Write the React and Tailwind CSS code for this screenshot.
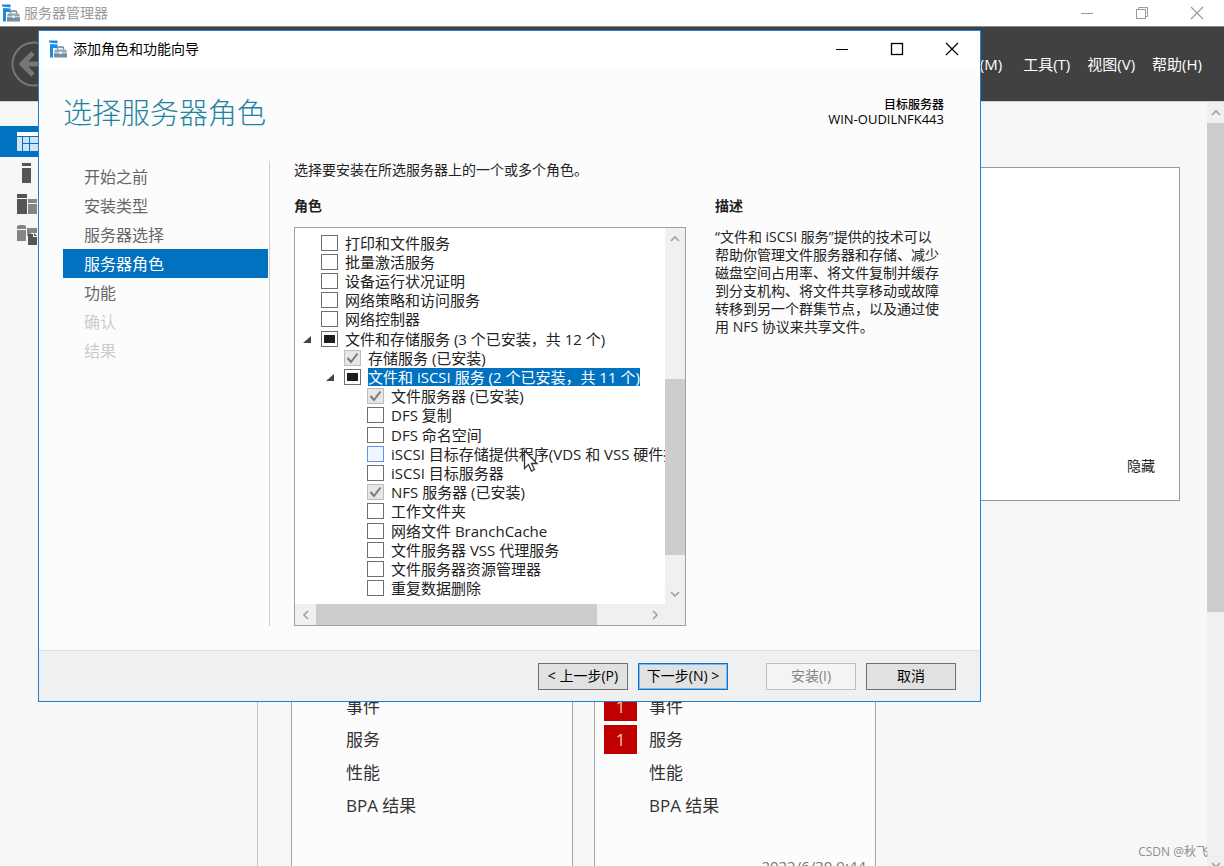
import React, { useState } from 'react';

const NAV_STEPS = [
  { label: '开始之前', state: 'done' },
  { label: '安装类型', state: 'done' },
  { label: '服务器选择', state: 'done' },
  { label: '服务器角色', state: 'current' },
  { label: '功能', state: 'done' },
  { label: '确认', state: 'disabled' },
  { label: '结果', state: 'disabled' },
];

const ROLES = [
  { id: 'print', label: '打印和文件服务', level: 0 },
  { id: 'activation', label: '批量激活服务', level: 0 },
  { id: 'health', label: '设备运行状况证明', level: 0 },
  { id: 'npas', label: '网络策略和访问服务', level: 0 },
  { id: 'controller', label: '网络控制器', level: 0 },
  { id: 'storage', label: '文件和存储服务 (3 个已安装，共 12 个)', level: 0, state: 'partial', open: true },
  { id: 'storage-svc', label: '存储服务 (已安装)', level: 1, state: 'installed' },
  { id: 'iscsi', label: '文件和 iSCSI 服务 (2 个已安装，共 11 个)', level: 1, state: 'partial', open: true, selected: true },
  { id: 'file-server', label: '文件服务器 (已安装)', level: 2, state: 'installed' },
  { id: 'dfs-r', label: 'DFS 复制', level: 2 },
  { id: 'dfs-n', label: 'DFS 命名空间', level: 2 },
  { id: 'iscsi-provider', label: 'iSCSI 目标存储提供程序(VDS 和 VSS 硬件提', level: 2, hot: true },
  { id: 'iscsi-target', label: 'iSCSI 目标服务器', level: 2 },
  { id: 'nfs', label: 'NFS 服务器 (已安装)', level: 2, state: 'installed' },
  { id: 'work-folders', label: '工作文件夹', level: 2 },
  { id: 'branchcache', label: '网络文件 BranchCache', level: 2 },
  { id: 'vss-agent', label: '文件服务器 VSS 代理服务', level: 2 },
  { id: 'fsrm', label: '文件服务器资源管理器', level: 2 },
  { id: 'dedup', label: '重复数据删除', level: 2 },
];

const INDENT = ['pl-[7px]', 'pl-[30px]', 'pl-[53px]'];

const ServerManagerIcon = () => (
  <svg width="18" height="18" viewBox="0 0 18 18" aria-hidden="true">
    <path d="M0 .5h8.500v3L0 2.500z" fill="#1a8ae2" />
    <path d="M1 4l7.500 .6V17.500H1z" fill="#1a8ae2" />
    <path d="M4 8h14v10H4z" fill="#fff" />
    <path d="M8.500 9.500V8q0-1 1-1h4q1 0 1 1v1.500" fill="none" stroke="#6d8796" strokeWidth="1.300" />
    <path d="M6 9.500h11l1 3H5z" fill="#8fa6b3" />
    <rect x="5" y="13.200" width="13" height="4.300" fill="#7590a0" />
    <rect x="10.300" y="11.500" width="2.400" height="2.500" fill="#eef3f6" />
  </svg>
);

const Chevron = ({ d }) => (
  <svg width="10" height="10" viewBox="0 0 10 10" fill="none" stroke="#a0a0a0" strokeWidth="1.600" aria-hidden="true">
    <path d={d} />
  </svg>
);

const UP = 'M1 7l4-4 4 4';
const DOWN = 'M1 3l4 4 4-4';
const LEFT = 'M7 1L3 5l4 4';
const RIGHT = 'M3 1l4 4-4 4';

const MinimizeIcon = () => (
  <svg width="14" height="14" viewBox="0 0 14 14" stroke="currentColor" fill="none">
    <path d="M1 7.500h12" />
  </svg>
);

const MaximizeIcon = () => (
  <svg width="14" height="14" viewBox="0 0 14 14" stroke="currentColor" fill="none">
    <rect x="1.500" y="1.500" width="11" height="11" strokeWidth="1.300" />
  </svg>
);

const RestoreIcon = () => (
  <svg width="14" height="14" viewBox="0 0 14 14" stroke="currentColor" fill="none">
    <path d="M3.500 3.500v-2h9v9h-2" />
    <rect x="1.500" y="3.500" width="9" height="9" />
  </svg>
);

const CloseIcon = () => (
  <svg width="14" height="14" viewBox="0 0 14 14" stroke="currentColor" fill="none">
    <path d="M1 1l12 12M13 1L1 13" strokeWidth="1.200" />
  </svg>
);

const SidebarItem = ({ active, label, children }) => (
  <button
    aria-label={label}
    className={`flex h-[31px] items-center pl-4 ${active ? 'bg-[#0072c0]' : ''}`}
  >
    <svg width="24" height="22" viewBox="0 0 24 22" aria-hidden="true">{children}</svg>
  </button>
);

const ServerTile = ({ rows, time }) => (
  <section className="flex w-[282px] flex-col border border-[#a6a6a6] bg-[#fcfcfc] pt-[126px]">
    {rows.map((row) => (
      <div key={row.label} className="flex h-[33px] items-center gap-3 pl-[9px] text-[17px] text-[#333]">
        <span
          className={`flex h-[29px] w-[33px] items-center justify-center ${
            row.alert ? 'bg-[#c00000] text-[#f0cfae]' : ''
          }`}
        >
          {row.alert}
        </span>
        <span>{row.label}</span>
      </div>
    ))}
    <time className="mt-8 h-6 pr-[9px] text-right text-[15px] leading-6 text-[#777]">{time}</time>
  </section>
);

const ServerManager = () => (
  <div className="flex h-full flex-col">
    <header className="flex h-[26px] shrink-0 items-center bg-white pl-[2px] text-[#9a9a9a]">
      <ServerManagerIcon />
      <h1 className="ml-1 flex-1 text-sm">服务器管理器</h1>
      <div className="flex gap-[41px] pr-5">
        <button aria-label="最小化"><MinimizeIcon /></button>
        <button aria-label="还原"><RestoreIcon /></button>
        <button aria-label="关闭"><CloseIcon /></button>
      </div>
    </header>

    <div className="flex h-[76px] shrink-0 items-center border-y border-t-[#8a8a8a] border-b-[#d0d0d0] bg-[#414141] pl-[11px]">
      <button aria-label="后退">
        <svg width="46" height="46" viewBox="0 0 46 46" fill="none" stroke="#777">
          <circle cx="23" cy="23" r="21.500" strokeWidth="2" />
          <path d="M22 12L11 23l11 11M12 23h24" strokeWidth="5" />
        </svg>
      </button>
      <nav className="ml-auto flex gap-[17px] pr-[22px] text-[15px] text-white">
        <button className="mr-1">管理(M)</button>
        <button>工具(T)</button>
        <button>视图(V)</button>
        <button>帮助(H)</button>
      </nav>
    </div>

    <div className="flex min-h-0 flex-1 bg-[#f7f7f7]">
      <aside className="flex w-[258px] shrink-0 flex-col border-r border-[#c4c4c4] pt-6">
        <SidebarItem active label="仪表板">
          <rect x="1" y="1" width="22" height="4" fill="#fff" />
          <path d="M1 6h5v14H1zM7 6h6v6H7zM14 6h9v6h-9zM7 13h6v7H7zM14 13h9v7h-9z" fill="#cfe3f2" />
        </SidebarItem>
        <SidebarItem label="本地服务器">
          <path d="M6 1h9v3H6zM6 6h9v15H6z" fill="#555" />
        </SidebarItem>
        <SidebarItem label="所有服务器">
          <path d="M1 1h10v4H1zM1 6h10v15H1z" fill="#555" />
          <path d="M12 6h9v4h-9zM12 11h9v10h-9z" fill="#858585" />
        </SidebarItem>
        <SidebarItem label="文件和存储服务">
          <path d="M1 2l2-1h5l2 1v3H1zM1 6h9v11H1zM11 4h10v5h-6v3h-4z" fill="#858585" />
          <path d="M12 10h5v3h4v8h-9z" fill="#555" />
          <path d="M18 9l3 3h-3z" fill="#555" />
        </SidebarItem>
      </aside>

      <main className="flex min-w-0 flex-1 flex-col pr-[27px] pl-[33px]">
        <section className="mt-[65px] flex h-[334px] shrink-0 items-end justify-end border border-[#999] bg-white p-6">
          <button className="text-sm text-[#222]">隐藏</button>
        </section>
        <div className="mt-[62px] flex shrink-0 gap-[21px]">
          <ServerTile rows={[{ label: '事件' }, { label: '服务' }, { label: '性能' }, { label: 'BPA 结果' }]} />
          <ServerTile
            rows={[{ label: '事件', alert: 1 }, { label: '服务', alert: 1 }, { label: '性能' }, { label: 'BPA 结果' }]}
            time="2022/6/30 9:44"
          />
        </div>
      </main>

      <div className="flex w-[17px] shrink-0 flex-col bg-[#f0f0f0]">
        <button aria-label="向上滚动" className="flex h-[21px] items-center justify-center"><Chevron d={UP} /></button>
        <div className="h-[64%] bg-[#cdcdcd]" />
        <button aria-label="向下滚动" className="-mb-1 mt-auto flex justify-center"><Chevron d={DOWN} /></button>
      </div>
    </div>
  </div>
);

const RoleRow = ({ role, checked, onToggle }) => {
  const installed = role.state === 'installed';
  const partial = role.state === 'partial';

  return (
    <li className={`flex min-h-0 flex-1 items-center ${INDENT[role.level]}`}>
      <span className="flex w-[19px] shrink-0">
        {role.open && (
          <svg width="10" height="10" viewBox="0 0 10 10" aria-hidden="true">
            <path d="M9 2v7H1z" fill="#444" />
          </svg>
        )}
      </span>
      <span className="grid shrink-0 place-items-center">
        <input
          id={role.id}
          type="checkbox"
          checked={installed || checked}
          disabled={installed}
          onChange={onToggle}
          className={`col-start-1 row-start-1 h-4 w-[17px] appearance-none border ${
            installed ? 'border-[#bcbcbc] bg-[#e6e6e6]' : role.hot ? 'border-[#5c93f5] bg-[#f0f6ff]' : 'border-[#707070] bg-white'
          }`}
        />
        {partial && <span className="pointer-events-none col-start-1 row-start-1 h-2 w-[11px] bg-[#1e1e1e]" />}
        {(installed || checked) && (
          <svg className="pointer-events-none col-start-1 row-start-1" width="13" height="12" viewBox="0 0 13 12" fill="none">
            <path d="M1.500 6l3.500 4L11.500 1.500" stroke="#777" strokeWidth="2" />
          </svg>
        )}
      </span>
      <label
        htmlFor={role.id}
        className={`ml-[7px] text-[15px] leading-[18px] whitespace-nowrap ${role.selected ? 'bg-[#0072c0] text-white' : ''}`}
      >
        {role.label}
      </label>
    </li>
  );
};

const RoleTree = () => {
  const [checked, setChecked] = useState({});

  const toggle = (id) => setChecked((prev) => ({ ...prev, [id]: !prev[id] }));

  return (
    <div className="flex min-h-0 flex-1 flex-col border border-[#a0a0a0] bg-white">
      <div className="flex min-h-0 flex-1">
        <ul className="flex min-w-0 flex-1 flex-col overflow-hidden pt-[5px] pb-[6px]">
          {ROLES.map((role) => (
            <RoleRow key={role.id} role={role} checked={!!checked[role.id]} onToggle={() => toggle(role.id)} />
          ))}
        </ul>
        <div className="flex w-5 shrink-0 flex-col bg-[#f0f0f0]">
          <button aria-label="向上" className="flex h-[22px] items-center justify-center"><Chevron d={UP} /></button>
          <div className="mt-auto h-[176px] bg-[#cdcdcd]" />
          <button aria-label="向下" className="mt-7 flex h-[21px] items-center justify-center"><Chevron d={DOWN} /></button>
        </div>
      </div>
      <div className="flex h-[21px] shrink-0 bg-[#f0f0f0] pr-5">
        <button aria-label="向左" className="flex w-[21px] items-center justify-center"><Chevron d={LEFT} /></button>
        <div className="w-[281px] bg-[#cdcdcd]" />
        <button aria-label="向右" className="ml-auto flex w-[21px] items-center justify-center"><Chevron d={RIGHT} /></button>
      </div>
    </div>
  );
};

const WizardButton = ({ variant = 'normal', disabled, children }) => {
  const look = {
    normal: 'border-[#707070] bg-[#e1e1e1] text-black',
    primary: 'border-[#0078d7] bg-[#e1e1e1] text-black ring-1 ring-[#0078d7]/40 ring-inset',
    disabled: 'border-[#bfbfbf] bg-[#f4f4f4] text-[#838383]',
  }[disabled ? 'disabled' : variant];

  return (
    <button disabled={disabled} className={`h-[27px] w-[90px] border text-sm whitespace-nowrap ${look}`}>
      {children}
    </button>
  );
};

const Wizard = () => (
  <div
    role="dialog"
    aria-labelledby="wizard-title"
    className="absolute top-[30px] left-[38px] flex h-[672px] w-[943px] flex-col border border-[#1c80d6] bg-[#fcfcfc]"
  >
    <div className="flex h-9 shrink-0 items-center bg-white pr-[21px] pl-[10px] text-black">
      <ServerManagerIcon />
      <h2 id="wizard-title" className="ml-[6px] flex-1 text-sm">添加角色和功能向导</h2>
      <div className="flex gap-[41px]">
        <button aria-label="最小化"><MinimizeIcon /></button>
        <button aria-label="最大化"><MaximizeIcon /></button>
        <button aria-label="关闭"><CloseIcon /></button>
      </div>
    </div>

    <div className="flex justify-between pt-6 pr-9 pl-6">
      <h3 className="text-[29px] leading-[44px] font-light text-[#1f829f]">选择服务器角色</h3>
      <div className="pt-[6px] text-right text-black">
        <p className="text-xs leading-[15px] font-medium">目标服务器</p>
        <p className="text-[13px] leading-[15px]">WIN-OUDILNFK443</p>
      </div>
    </div>

    <div className="flex min-h-0 flex-1 pt-[26px] pr-[38px] pb-6 pl-6">
      <nav className="mr-6 w-[207px] shrink-0 border-r border-[#cfcfcf] pt-px pr-[1px]">
        {NAV_STEPS.map((step) => (
          <button
            key={step.label}
            disabled={step.state === 'disabled'}
            className={`block h-[29px] w-full pl-[21px] text-left text-base ${
              step.state === 'current' ? 'bg-[#0072c0] text-white' : step.state === 'disabled' ? 'text-[#ccc]' : 'text-[#666]'
            }`}
          >
            {step.label}
          </button>
        ))}
      </nav>

      <div className="flex w-[392px] shrink-0 flex-col text-[#222]">
        <p className="text-sm leading-[18px]">选择要安装在所选服务器上的一个或多个角色。</p>
        <h4 className="mt-[18px] mb-3 text-sm leading-[18px] font-bold">角色</h4>
        <RoleTree />
      </div>

      <div className="ml-[29px] min-w-0 flex-1 pt-9 text-sm leading-[18px] text-[#222]">
        <h4 className="mb-[13px] font-bold">描述</h4>
        <p>
          “文件和 iSCSI 服务”提供的技术可以帮助你管理文件服务器和存储、减少磁盘空间占用率、将文件复制并缓存到分支机构、将文件共享移动或故障转移到另一个群集节点，以及通过使用 NFS 协议来共享文件。
        </p>
      </div>
    </div>

    <footer className="flex h-[51px] shrink-0 items-center justify-end border-t border-[#dfdfdf] bg-[#f0f0f0] pr-6">
      <div className="flex gap-[10px]">
        <WizardButton>&lt; 上一步(P)</WizardButton>
        <WizardButton variant="primary">下一步(N) &gt;</WizardButton>
      </div>
      <div className="ml-[38px] flex gap-[10px]">
        <WizardButton disabled>安装(I)</WizardButton>
        <WizardButton>取消</WizardButton>
      </div>
    </footer>
  </div>
);

export default function App() {
  return (
    <div
      lang="zh-CN"
      className="relative h-screen overflow-hidden bg-[#f7f7f7] font-['Open_Sans','Noto_Sans_CJK_SC',sans-serif]"
    >
      <ServerManager />
      <Wizard />
      <svg className="pointer-events-none absolute top-[449px] left-[523px]" width="16" height="24" viewBox="0 0 16 24">
        <path d="M1.500 1.500v18l4-4 3 6.500 3-1.500-3-6h5.500z" fill="#fff" stroke="#333" strokeWidth="1.300" />
      </svg>
      <span className="absolute right-4 bottom-1 text-xs leading-5 text-[#8f8f8f]">CSDN @秋飞</span>
    </div>
  );
}
